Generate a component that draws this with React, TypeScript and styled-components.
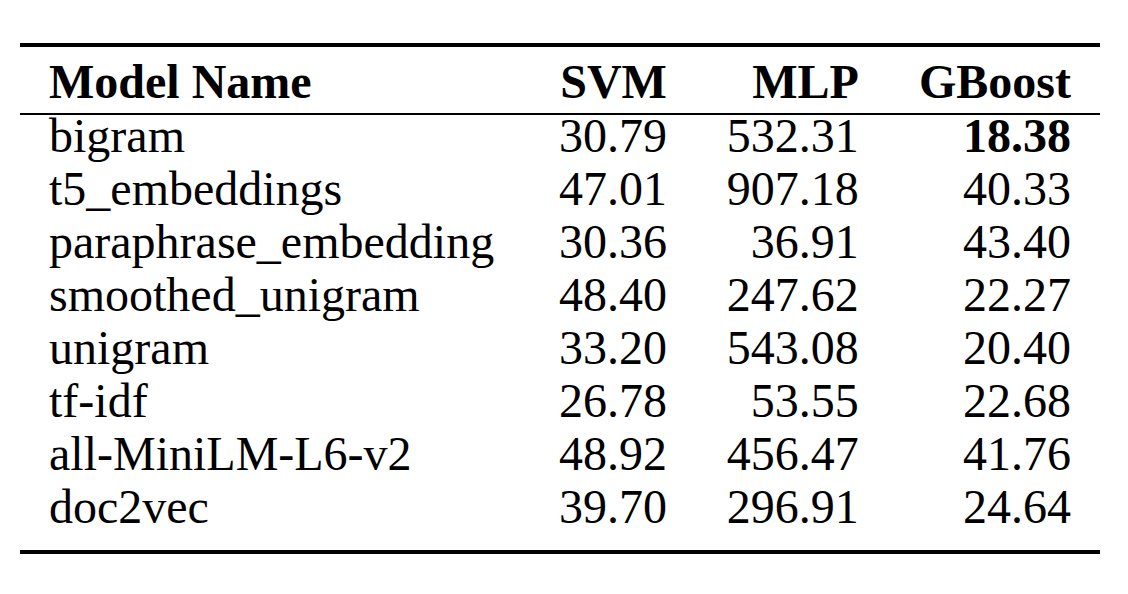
import React from "react";
import styled, { createGlobalStyle } from "styled-components";

const Global = createGlobalStyle`
  html, body {
    margin: 0;
    padding: 0;
    background: #ffffff;
  }
  body {
    font-family: "Liberation Serif", "Times New Roman", serif;
    color: #000000;
  }
`;

const Page = styled.div`
  width: 1128px;
  height: 594px;
  box-sizing: border-box;
  padding: 43px 28px 0 20px;
  background: #ffffff;
  overflow: hidden;
`;

const Table = styled.table`
  border-collapse: collapse;
  border-spacing: 0;
  width: 1080px;
  font-family: "Liberation Serif", "Times New Roman", serif;
  font-size: 48px;
  color: #000;
  border-top: 4px solid #000;
  border-bottom: 4px solid #000;
`;

const HeadRow = styled.tr`
  border-bottom: 2px solid #000;
`;

const HeadCell = styled.th<{ $align?: "left" | "right" }>`
  font-family: inherit;
  font-weight: 700;
  text-align: ${(p) => p.$align ?? "right"};
  line-height: 41.6px;
  padding: 14px 29px 10px 29px;
  white-space: nowrap;
`;

const Cell = styled.td<{ $align?: "left" | "right"; $bold?: boolean; $last?: boolean }>`
  font-family: inherit;
  text-align: ${(p) => p.$align ?? "right"};
  font-weight: ${(p) => (p.$bold ? 700 : 400)};
  line-height: 41.6px;
  padding: 0 29px ${(p) => (p.$last ? "22px" : "11.5px")} 29px;
  white-space: nowrap;
`;

type Row = { name: string; svm: string; mlp: string; gb: string; best?: boolean };

const rows: Row[] = [
  { name: "bigram", svm: "30.79", mlp: "532.31", gb: "18.38", best: true },
  { name: "t5_embeddings", svm: "47.01", mlp: "907.18", gb: "40.33" },
  { name: "paraphrase_embedding", svm: "30.36", mlp: "36.91", gb: "43.40" },
  { name: "smoothed_unigram", svm: "48.40", mlp: "247.62", gb: "22.27" },
  { name: "unigram", svm: "33.20", mlp: "543.08", gb: "20.40" },
  { name: "tf-idf", svm: "26.78", mlp: "53.55", gb: "22.68" },
  { name: "all-MiniLM-L6-v2", svm: "48.92", mlp: "456.47", gb: "41.76" },
  { name: "doc2vec", svm: "39.70", mlp: "296.91", gb: "24.64" },
];

export default function App() {
  return (
    <>
      <Global />
      <Page>
        <Table>
          <thead>
            <HeadRow>
              <HeadCell $align="left">Model Name</HeadCell>
              <HeadCell>SVM</HeadCell>
              <HeadCell>MLP</HeadCell>
              <HeadCell>GBoost</HeadCell>
            </HeadRow>
          </thead>
          <tbody>
            {rows.map((r, i) => {
              const last = i === rows.length - 1;
              return (
                <tr key={r.name}>
                  <Cell $align="left" $last={last}>{r.name}</Cell>
                  <Cell $last={last}>{r.svm}</Cell>
                  <Cell $last={last}>{r.mlp}</Cell>
                  <Cell $last={last} $bold={r.best}>{r.gb}</Cell>
                </tr>
              );
            })}
          </tbody>
        </Table>
      </Page>
    </>
  );
}
